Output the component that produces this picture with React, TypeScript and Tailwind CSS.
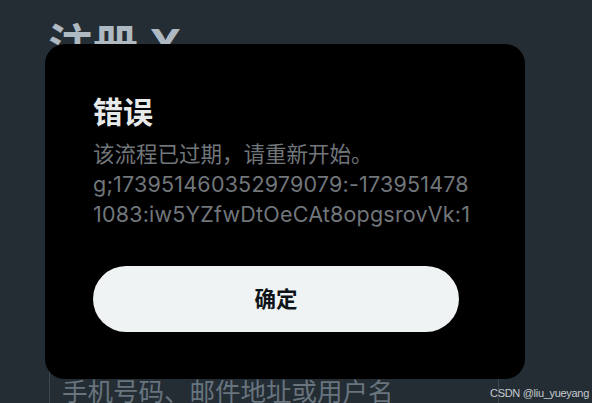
import React from "react";

const cjk = '"Inter", "Noto Sans CJK SC", sans-serif';

export default function App() {
  return (
    <div
      className="relative w-[592px] h-[403px] overflow-hidden bg-[#242d34]"
      style={{ fontFamily: cjk }}
    >
      {/* Page behind the mask */}
      <div className="flex flex-col pl-[48px] pt-[18px]">
        <div className="text-[45px] leading-[56px] font-bold text-[#afb9c1]">注册 X</div>
        <div className="mt-[280px] ml-[1px] w-[450px] h-[90px] rounded-[6px] border border-[#3c4650] pl-[12px] pt-[22px]">
          <div className="text-[25.5px] leading-[30px] text-[#68747e] whitespace-nowrap">手机号码、邮件地址或用户名</div>
        </div>
      </div>

      {/* Dialog */}
      <div className="absolute left-[45px] top-[44px] w-[480px] h-[335px] rounded-[20px] bg-black flex flex-col pl-[48px] pr-[40px] pt-[50px]">
        <div className="text-[30px] leading-[36px] font-bold text-[#e7e9ea]">错误</div>
        <div className="mt-[9px] text-[21.5px] leading-[30px] text-[#71767b] flex flex-col whitespace-nowrap">
          <span>该流程已过期，请重新开始。</span>
          <span className="tracking-[0.2px]">g;173951460352979079:-173951478</span>
          <span className="tracking-[0.2px]">1083:iw5YZfwDtOeCAt8opgsrovVk:1</span>
        </div>
        <div className="mt-[37px] w-[366px] h-[66px] rounded-full bg-[#eff3f4] flex items-center justify-center">
          <span className="text-[21.5px] font-bold text-[#0f1419]">确定</span>
        </div>
      </div>

      {/* Watermark */}
      <div
        className="absolute left-[490px] top-[385px] text-[11px] leading-[16px] tracking-[-0.3px] text-[#c5cbd0] whitespace-nowrap"
        style={{ fontFamily: '"Liberation Sans", sans-serif' }}
      >
        CSDN @liu_yueyang
      </div>
    </div>
  );
}
